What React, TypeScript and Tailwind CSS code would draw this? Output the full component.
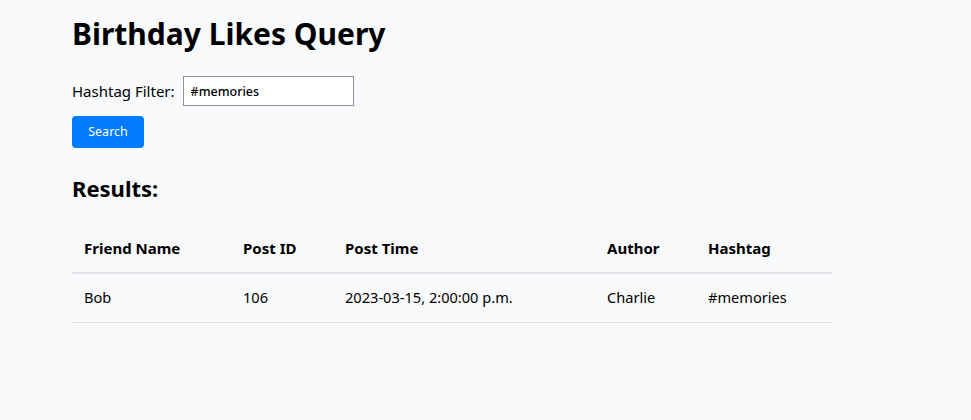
export default function App() {
  const rows = [
    { friend: "Bob", postId: "106", time: "2023-03-15, 2:00:00 p.m.", author: "Charlie", tag: "#memories" },
  ];

  return (
    <div className="min-h-[420px] w-full bg-[#f8f9fa] text-black font-['Noto_Sans',sans-serif]">
      <div className="pl-[72px] pt-[14px]">
        <h1 className="text-[30px] font-bold leading-[40px]">Birthday Likes Query</h1>

        <div className="mt-[22px] flex items-center">
          <label className="text-[15px] mr-[8px]">Hashtag Filter:</label>
          <input
            type="text"
            defaultValue="#memories"
            className="h-[30px] w-[171px] border border-[#8f8f9d] bg-white px-[7px] text-[12.5px] font-medium outline-none"
          />
        </div>

        <button className="mt-[10px] h-[32px] w-[72px] rounded-[4px] bg-[#007bff] text-[12.5px] text-white">
          Search
        </button>

        <h2 className="mt-[26px] text-[22px] font-bold leading-[28px]">Results:</h2>

        <table className="mt-[26px] w-[760px] table-fixed border-collapse text-[15px]">
          <colgroup>
            <col className="w-[159px]" />
            <col className="w-[102px]" />
            <col className="w-[262px]" />
            <col className="w-[101px]" />
            <col className="w-[136px]" />
          </colgroup>
          <thead>
            <tr className="border-b-2 border-[#dee2e6]">
              <th className="h-[45px] px-[12px] pb-[4px] text-left font-bold">Friend Name</th>
              <th className="px-[12px] pb-[4px] text-left font-bold">Post ID</th>
              <th className="px-[12px] pb-[4px] text-left font-bold">Post Time</th>
              <th className="px-[12px] pb-[4px] text-left font-bold">Author</th>
              <th className="px-[12px] pb-[4px] text-left font-bold">Hashtag</th>
            </tr>
          </thead>
          <tbody className="text-[14.6px]">
            {rows.map((r) => (
              <tr key={r.postId} className="border-b border-[#dee2e6]">
                <td className="h-[49px] px-[12px]">{r.friend}</td>
                <td className="px-[12px]">{r.postId}</td>
                <td className="px-[12px]">{r.time}</td>
                <td className="px-[12px]">{r.author}</td>
                <td className="px-[12px]">{r.tag}</td>
              </tr>
            ))}
          </tbody>
        </table>
      </div>
    </div>
  );
}
